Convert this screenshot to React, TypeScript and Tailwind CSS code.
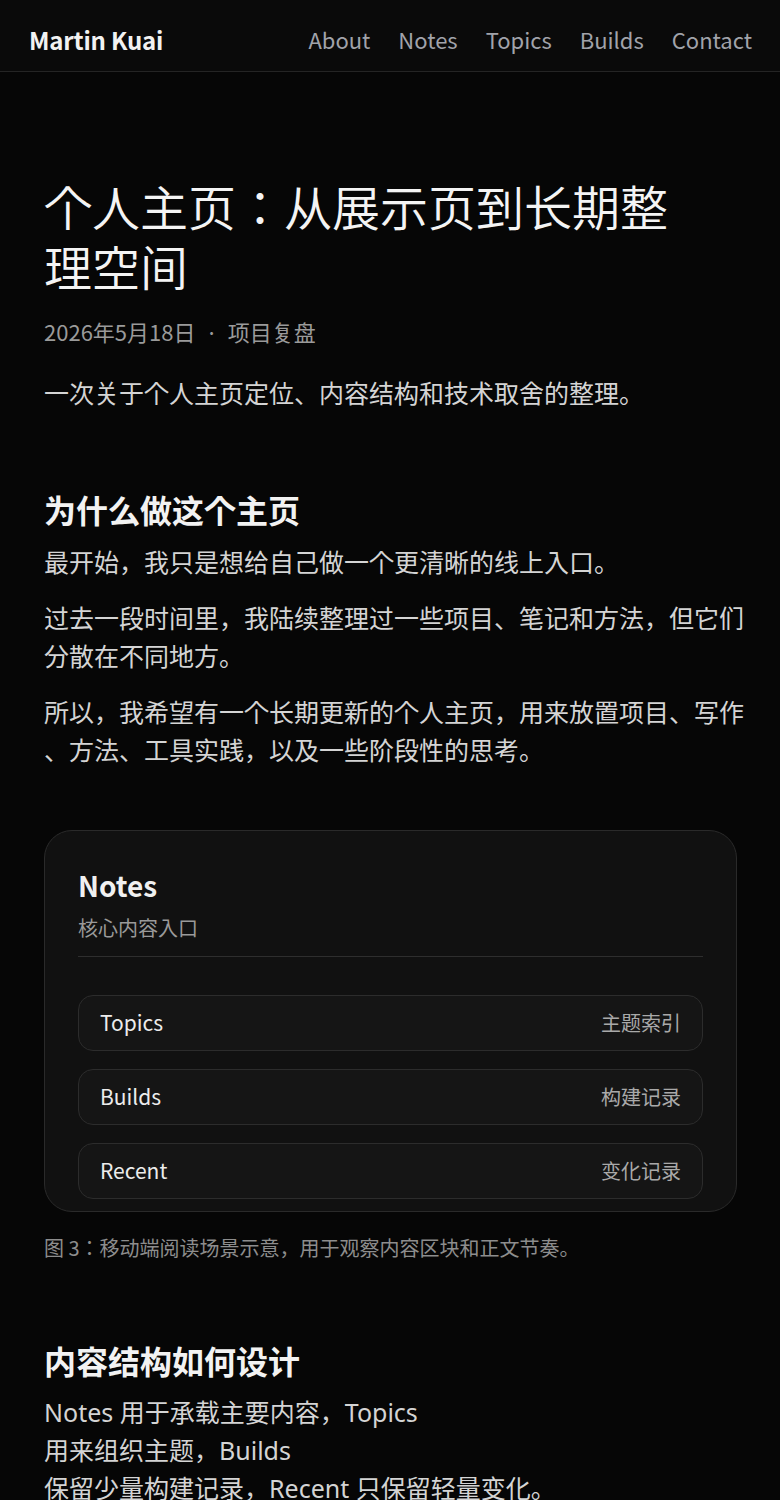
const NAV = ['About', 'Notes', 'Topics', 'Builds', 'Contact'];

const ROWS = [
  { label: 'Topics', note: '主题索引' },
  { label: 'Builds', note: '构建记录' },
  { label: 'Recent', note: '变化记录' },
];

const CJK = "font-['Noto_Sans_CJK_JP',sans-serif]";

export default function App() {
  return (
    <div className={`min-h-screen bg-[#060606] text-[#ececec] ${CJK}`}>

      {/* Header */}
      <header className="h-[72px] bg-[#0a0a0a] border-b border-[#242424] flex items-center justify-between pl-[29px] pr-[28px] pt-[8px]">
        <span className="text-[24px] font-bold text-[#f2f2f2] tracking-[-0.2px]">Martin Kuai</span>
        <nav className="flex gap-[28px]">
          {NAV.map((n) => (
            <span key={n} className="text-[22px] text-[#a1a3aa]">{n}</span>
          ))}
        </nav>
      </header>

      <main className="pl-[44px] pr-[36px] pt-[103px]">

        <h1 className="max-w-[660px] text-[48px] leading-[60px] font-[350] text-[#f4f4f4]">个人主页：从展示页到长期整理空间</h1>
        <p className="mt-[20px] text-[22px] text-[#9a9a9a] flex items-center gap-[10px]">
          <span>2026年5月18日</span>
          <span>·</span>
          <span>项目复盘</span>
        </p>
        <p className="mt-[25px] text-[25px] leading-[38px] text-[#d4d4d4]">一次关于个人主页定位、内容结构和技术取舍的整理。</p>

        {/* Section 1 */}
        <h2 className="mt-[76px] text-[32px] leading-[44px] font-bold text-[#f2f2f2]">为什么做这个主页</h2>
        <div className="mt-[11px] space-y-[18px] text-[25px] leading-[38px] text-[#d4d4d4] [line-break:anywhere]">
          <p>最开始，我只是想给自己做一个更清晰的线上入口。</p>
          <p>过去一段时间里，我陆续整理过一些项目、笔记和方法，但它们分散在不同地方。</p>
          <p>所以，我希望有一个长期更新的个人主页，用来放置项目、写作、方法、工具实践，以及一些阶段性的思考。</p>
        </div>

        {/* Figure */}
        <figure className="mt-[62px]">
          <div className="w-[693px] rounded-[28px] bg-[#111111] border border-[#2a2a2a] px-[33px] pt-[34px] pb-[12px]">
            <p className="text-[28px] leading-[40px] font-bold text-[#f0f0f0]">Notes</p>
            <p className="mt-[8px] text-[20px] leading-[30px] text-[#9a9a9a]">核心内容入口</p>
            <div className="mt-[13px] border-t border-[#2e2e2e]" />
            <div className="mt-[38px] space-y-[18px]">
              {ROWS.map((r) => (
                <div key={r.label} className="h-[56px] rounded-[15px] bg-[#151515] border border-[#2c2c2c] flex items-center justify-between px-[21px]">
                  <span className="text-[21px] text-[#ececec]">{r.label}</span>
                  <span className="text-[20px] text-[#a9a9a9]">{r.note}</span>
                </div>
              ))}
            </div>
          </div>
          <figcaption className="mt-[21px] text-[20px] leading-[30px] text-[#8d8d8d]">图 3：移动端阅读场景示意，用于观察内容区块和正文节奏。</figcaption>
        </figure>

        {/* Section 2 */}
        <h2 className="mt-[75px] text-[32px] leading-[44px] font-bold text-[#f2f2f2]">内容结构如何设计</h2>
        <p className="mt-[11px] text-[25px] leading-[38px] text-[#d4d4d4] font-['Noto_Sans','Noto_Sans_CJK_JP',sans-serif]">
          Notes 用于承载主要内容，Topics<br />
          用来组织主题，Builds<br />
          保留少量构建记录，Recent 只保留轻量变化。
        </p>

      </main>
    </div>
  );
}
